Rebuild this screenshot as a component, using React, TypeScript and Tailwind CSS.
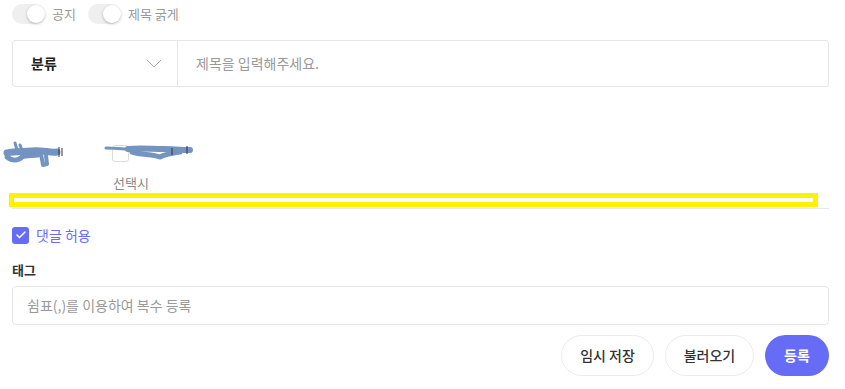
import { Check } from 'lucide-react';

const font = { fontFamily: '"Noto Sans CJK KR", "Noto Sans", sans-serif' };

function Toggle({ label }: { label: string }) {
  return (
    <label className="flex items-center gap-[7px]">
      <span className="relative h-[20px] w-[33px] rounded-full bg-[#efefef]">
        <span className="absolute right-0 top-[1px] h-[18px] w-[18px] rounded-full bg-white shadow-[0_1px_3px_rgba(0,0,0,0.25)]" />
      </span>
      <span className="text-[13px] text-[#999]">{label}</span>
    </label>
  );
}

// blurred-out option labels, drawn as marker scribbles
function Scribbles() {
  return (
    <div className="relative h-[28px]">
      <span className="absolute left-[100px] top-[5px] h-[17px] w-[17px] rounded-[3px] border border-[#dcdcdc] bg-white" />
      <svg width="200" height="28" viewBox="0 0 200 28" className="absolute -left-[12px] top-0">
        <g stroke="#7393c0" strokeLinecap="round" strokeLinejoin="round" fill="none">
          <path d="M7 13 C16 11 24 12 32 11 C42 10 50 13 57 12" strokeWidth="7" />
          <path d="M7 17 C12 21 18 21 22 17 C26 15 32 16 38 15" strokeWidth="5" />
          <path d="M15 3 L17 10 M20 5 L22 10" strokeWidth="3" />
          <path d="M41 14 L43 25 L47 24 L46 16" strokeWidth="4" />
          <path d="M106 8 C114 8 122 9 130 9" strokeWidth="3" />
          <path d="M128 9 C140 8 152 9 164 9 C172 9 180 10 190 10" strokeWidth="6" />
          <path d="M132 12 C142 15 152 14 160 17 C166 14 172 13 180 12" strokeWidth="5" />
        </g>
        <g stroke="#333" strokeWidth="1">
          <path d="M59 7 V17 M62 8 V16" />
          <path d="M172 8 V15" />
          <path d="M187 6 V14" />
        </g>
      </svg>
    </div>
  );
}

export default function App() {
  return (
    <div className="w-[845px] bg-white pl-3 pr-4 pt-1" style={font}>
      <div className="flex items-center gap-[12px]">
        <Toggle label="공지" />
        <Toggle label="제목 굵게" />
      </div>

      <div className="mt-4 flex h-[47px] items-stretch rounded-[3px] border border-[#e6e6e6]">
        <div className="flex w-[165px] items-center justify-between border-r border-[#e6e6e6] pl-[18px] pr-[15px]">
          <span className="text-[14px] font-bold text-[#222]">분류</span>
          <svg width="16" height="9" viewBox="0 0 16 9" fill="none">
            <path d="M1 1 L8 8 L15 1" stroke="#aaa" strokeWidth="1" />
          </svg>
        </div>
        <div className="flex flex-1 items-center pl-[18px] text-[14px] text-[#999]">
          제목을 입력해주세요.
        </div>
      </div>

      <div className="mt-[53px]">
        <Scribbles />
      </div>
      <div className="ml-[101px] mt-[6px] text-[13px] leading-[18px] text-[#888]">선택시</div>

      <div className="-ml-[3px] mt-px h-[14px] w-[809px] border-[5px] border-[#fff200]" />
      <div className="mt-px h-px bg-[#e8e8e8]" />

      <label className="mt-[16px] flex items-center gap-[7px]">
        <span className="flex h-[17px] w-[17px] items-center justify-center rounded-[3px] bg-[#676cf6]">
          <Check size={12} strokeWidth={3} className="text-white" />
        </span>
        <span className="text-[14px] leading-[20px] text-[#676cf6]">댓글 허용</span>
      </label>

      <div className="mt-[16px] text-[13px] font-bold leading-[18px] text-[#333]">태그</div>
      <div className="mt-[7px] flex h-[39px] items-center rounded-[4px] border border-[#e8e8e8] pl-[14px] text-[14px] text-[#999]">
        쉼표(,)를 이용하여 복수 등록
      </div>

      <div className="mt-[10px] flex justify-end gap-[11px]">
        <button className="h-[41px] w-[93px] rounded-full border border-[#ebebeb] bg-white text-[14px] font-medium text-[#333]">
          임시 저장
        </button>
        <button className="h-[41px] w-[89px] rounded-full border border-[#ebebeb] bg-white text-[14px] font-medium text-[#333]">
          불러오기
        </button>
        <button className="h-[41px] w-[64px] rounded-full bg-[#676cf6] text-[14px] font-bold text-white">
          등록
        </button>
      </div>
    </div>
  );
}
